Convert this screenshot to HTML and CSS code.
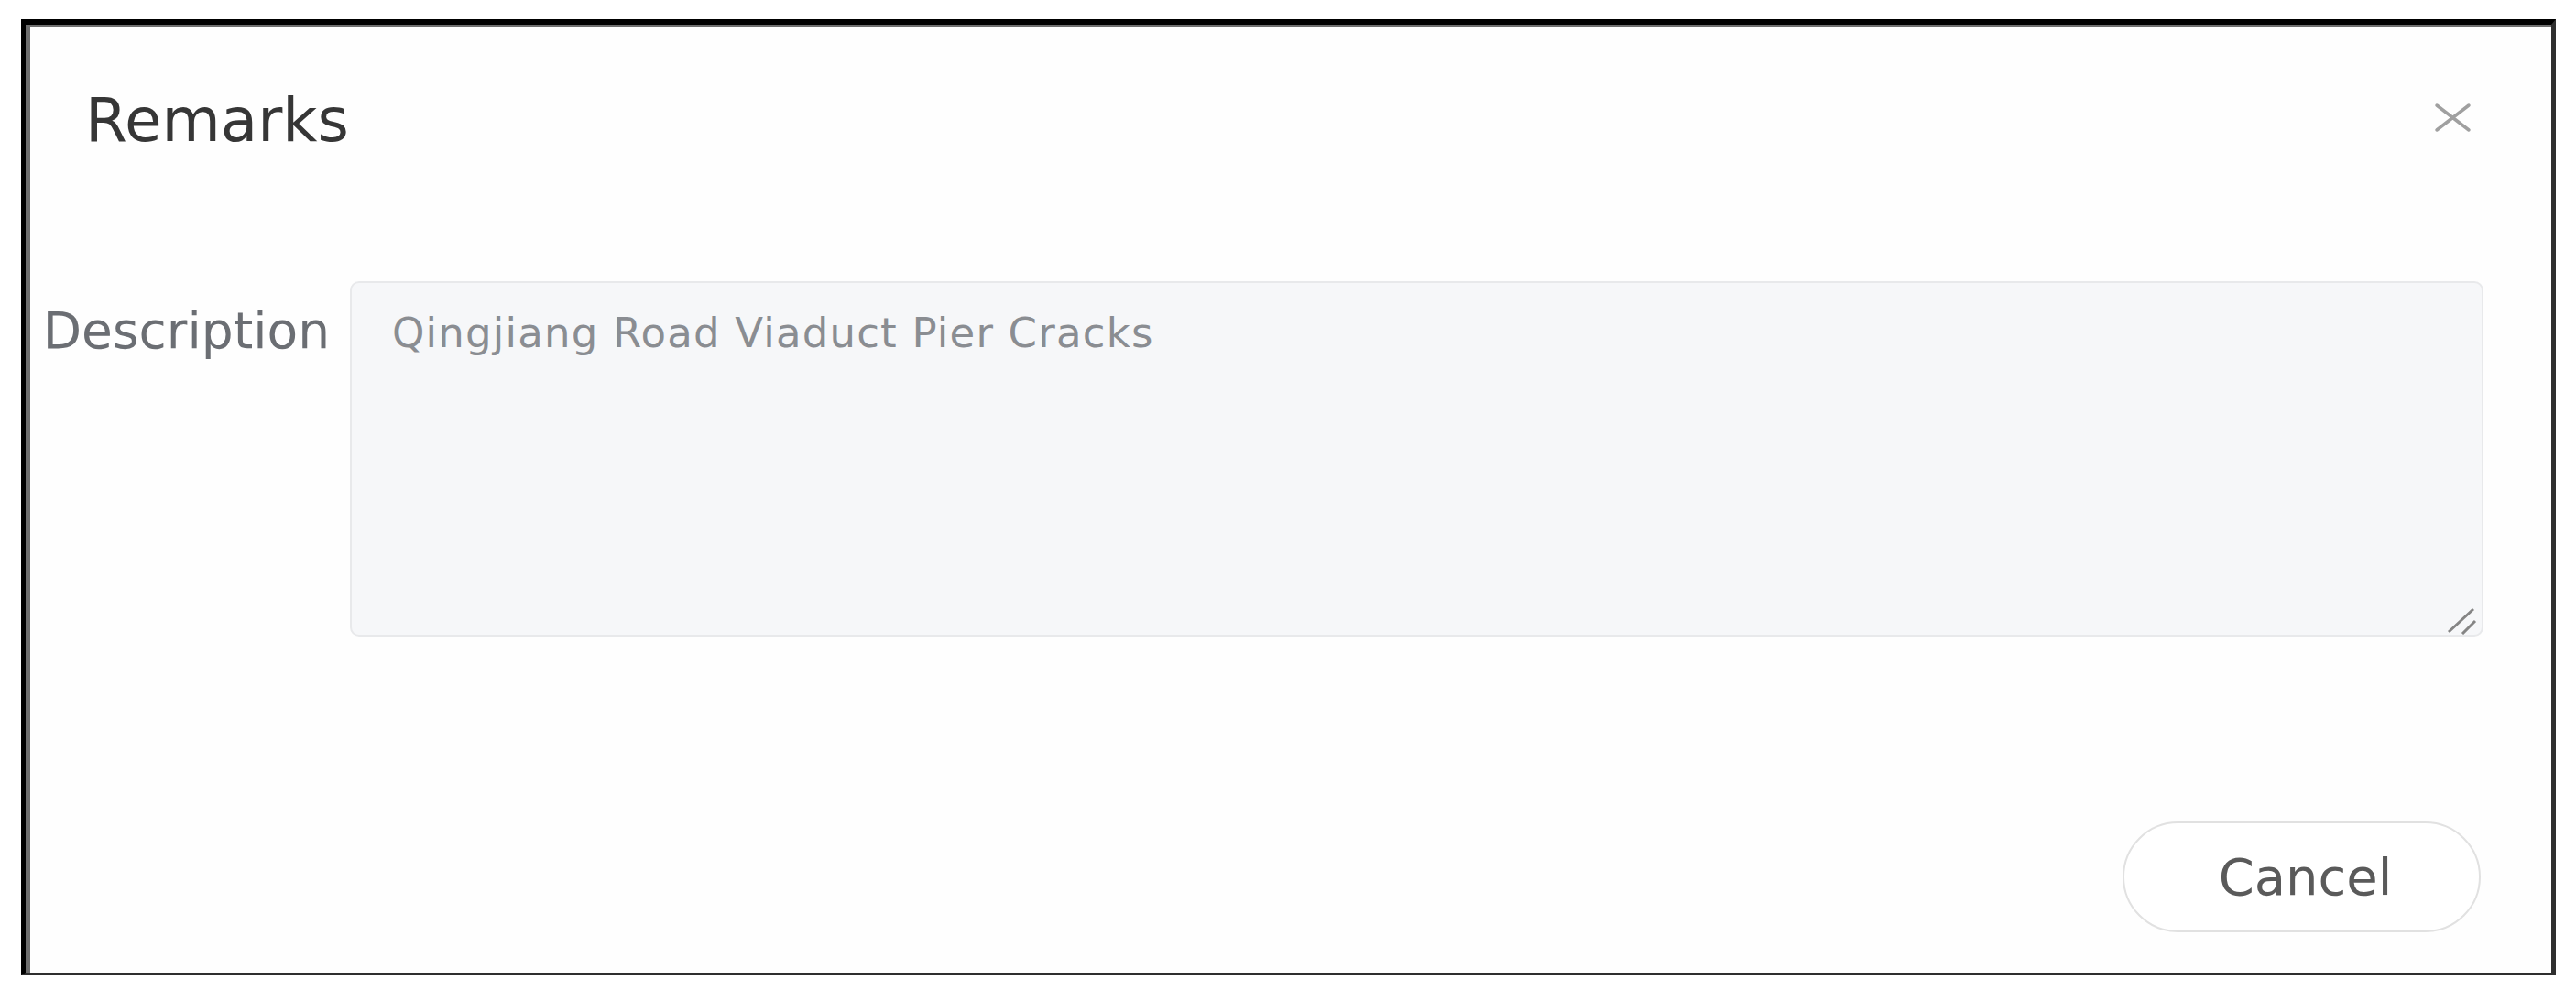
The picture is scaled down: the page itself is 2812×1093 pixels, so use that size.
FILE: index.html
```html
<!DOCTYPE html>
<html lang="en">
<head>
<meta charset="utf-8">
<title>Remarks</title>
<link rel="stylesheet" href="styles.css">
</head>
<body>
<div class="dialog">
  <div class="dialog-header">
    <h1 class="dialog-title">Remarks</h1>
    <button class="close-btn" aria-label="Close">
      <svg width="41" height="33" viewBox="0 0 41 33">
        <path d="M3 3 L38 30 M38 3 L3 30" stroke="#a0a0a0" stroke-width="3.5" fill="none" stroke-linecap="round"/>
      </svg>
    </button>
  </div>
  <div class="form-row">
    <label class="form-label">Description</label>
    <div class="textarea">
      <span class="textarea-text">Qingjiang Road Viaduct Pier Cracks</span>
      <svg class="grip" width="40" height="36" viewBox="0 0 40 36">
        <path d="M4 33 L31 8 M19 35 L33 21" stroke="#858585" stroke-width="3" fill="none"/>
      </svg>
    </div>
  </div>
  <div class="dialog-footer">
    <button class="cancel-btn">Cancel</button>
  </div>
</div>
</body>
</html>
```

FILE: styles.css
```css
* {
  box-sizing: border-box;
}

html, body {
  margin: 0;
  padding: 0;
  background: #ffffff;
}

body {
  font-family: "DejaVu Sans", "Liberation Sans", sans-serif;
}

.dialog {
  margin: 21px 0 0 23px;
  width: 2767px;
  height: 1044px;
  background: #fefefe;
  border-top: 6px solid #000000;
  border-left: 5px solid #000000;
  border-right: 5px solid #2f2f2f;
  border-bottom: 3px solid #2f2f2f;
  box-shadow: inset 5px 3px 0 #6e6e6e;
  display: flex;
  flex-direction: column;
}

.dialog-header {
  display: flex;
  justify-content: space-between;
  align-items: flex-start;
  padding: 72px 87px 0 65px;
}

.dialog-title {
  margin: 0;
  font-size: 66px;
  line-height: 66px;
  font-weight: normal;
  color: #363636;
}

.close-btn {
  margin-top: 13px;
  padding: 0;
  border: none;
  background: transparent;
  width: 41px;
  height: 33px;
  display: flex;
}

.form-row {
  display: flex;
  align-items: flex-start;
  gap: 22px;
  margin-top: 142px;
  padding: 0 74px 0 5px;
}

.form-label {
  flex: 0 0 327px;
  text-align: right;
  font-size: 55px;
  line-height: 55px;
  margin-top: 27px;
  color: #6b6e73;
}

.textarea {
  position: relative;
  flex: 1;
  height: 388px;
  background: #f6f7f9;
  border: 2px solid #e8e9eb;
  border-radius: 10px;
  padding: 32px 40px 0 44px;
}

.textarea-text {
  display: block;
  font-size: 45px;
  line-height: 45px;
  letter-spacing: 1.2px;
  color: #8a8d92;
}

.grip {
  position: absolute;
  right: 0;
  bottom: 0;
}

.dialog-footer {
  display: flex;
  justify-content: flex-end;
  margin-top: 202px;
  padding-right: 77px;
}

.cancel-btn {
  width: 391px;
  height: 121px;
  border: 2px solid #e1e1e1;
  border-radius: 61px;
  background: #ffffff;
  font-family: "DejaVu Sans", "Liberation Sans", sans-serif;
  font-size: 56px;
  line-height: 56px;
  color: #5a5a5a;
  display: flex;
  align-items: center;
  justify-content: center;
  padding: 0 0 0 8px;
}
```
